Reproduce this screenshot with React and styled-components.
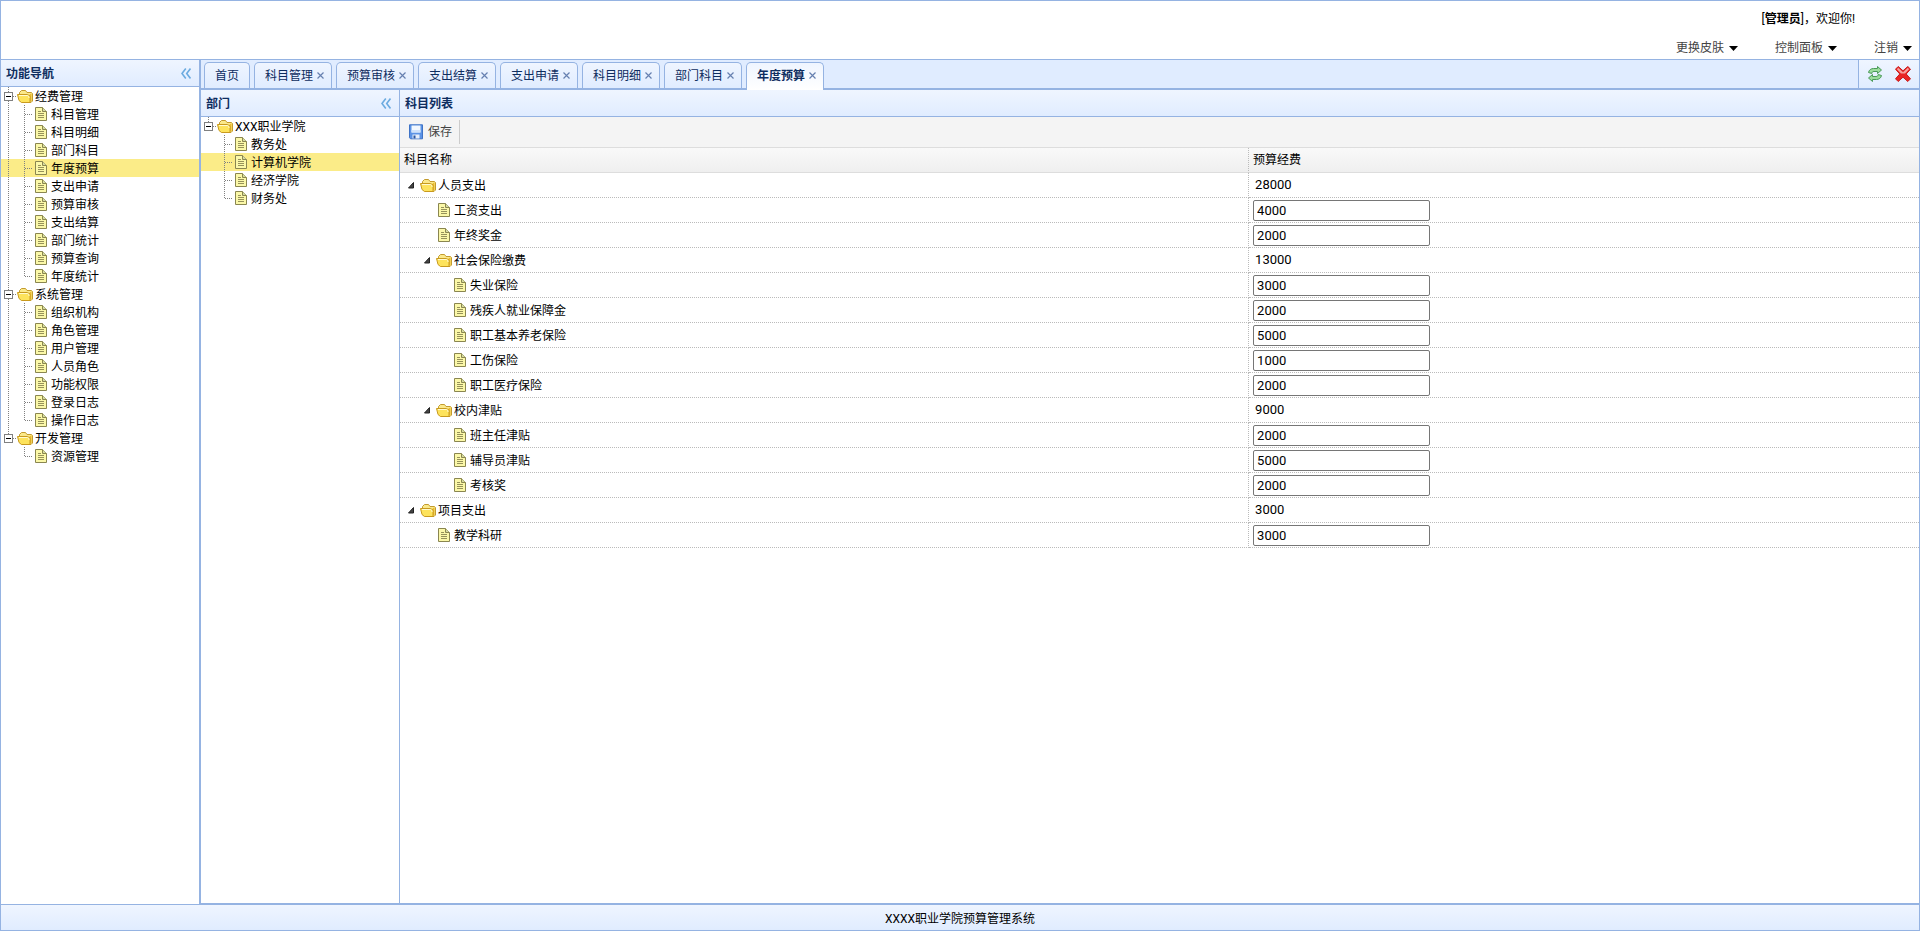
import React, { useState } from 'react'
import styled, { createGlobalStyle, css } from 'styled-components'

const GlobalStyle = createGlobalStyle`
  * {
    box-sizing: border-box;
  }
  body {
    margin: 0;
    background: #fff;
    color: #000;
    font: 12px/18px Roboto, "Noto Sans CJK SC", sans-serif;
  }
  button, input {
    font: inherit;
    color: inherit;
  }
  ul {
    list-style: none;
    margin: 0;
    padding: 0;
  }
`

const LINE = '#95b3e2'

const Page = styled.div`
  display: grid;
  height: 100vh;
  min-height: 500px;
  grid-template-columns: 199px 1fr;
  grid-template-rows: 59px 1fr 26px;
  grid-template-areas: "header header" "nav main" "footer footer";
  border: 1px solid ${LINE};
  border-top: 0;
`

const Header = styled.header`
  grid-area: header;
  display: flex;
  flex-direction: column;
  align-items: flex-end;
  border-top: 1px solid ${LINE};
`

const Welcome = styled.div`
  padding: 8px 64px 0 0;
  line-height: 20px;
`

const MenuBar = styled.div`
  display: flex;
  gap: 37px;
  padding: 9px 7px 0 0;
`

const MenuButton = styled.button`
  display: flex;
  align-items: center;
  gap: 5px;
  padding: 0;
  border: 0;
  background: none;
  color: #444;
  line-height: 20px;
`

const Nav = styled.nav`
  grid-area: nav;
  display: flex;
  flex-direction: column;
  border-top: 1px solid ${LINE};
  border-right: 1px solid ${LINE};
`

const Main = styled.main`
  grid-area: main;
  display: flex;
  flex-direction: column;
  min-width: 0;
  border: 1px solid ${LINE};
  border-right: 0;
`

const Footer = styled.footer`
  grid-area: footer;
  display: flex;
  align-items: center;
  justify-content: center;
  padding-top: 2px;
  border-top: 1px solid ${LINE};
  background: linear-gradient(#eff5ff, #e0ecff);
`

const PanelHeader = styled.div`
  display: flex;
  flex: none;
  align-items: center;
  justify-content: space-between;
  height: 27px;
  padding: 0 8px 0 5px;
  border-bottom: 1px solid ${LINE};
  background: linear-gradient(#eff5ff, #e0ecff);
`

const PanelTitle = styled.h2`
  margin: 0;
  padding-top: 2px;
  color: #0e2d5f;
  font-size: 12px;
`

const IconButton = styled.button`
  display: flex;
  padding: 0;
  border: 0;
  background: none;
`

const TabStrip = styled.div`
  display: flex;
  flex: none;
  height: 30px;
  border-bottom: 2px solid ${LINE};
  background: #e0ecff;
`

const TabList = styled.div`
  display: flex;
  flex: 1;
  gap: 4px;
  padding: 2px 0 0 3px;
`

const Tab = styled.div`
  display: flex;
  align-items: center;
  justify-content: center;
  gap: 4px;
  width: ${(p) => (p.$closable ? 78 : 46)}px;
  height: 26px;
  padding-left: ${(p) => (p.$closable ? 3 : 0)}px;
  border: 1px solid ${LINE};
  border-bottom: 0;
  border-radius: 5px 5px 0 0;
  background: linear-gradient(#eff5ff, #e0ecff);
  color: #0e2d5f;

  ${(p) => p.$active && css`
    height: 28px;
    padding-bottom: 2px;
    margin-bottom: -2px;
    background: linear-gradient(#eff5ff, #fff);
    font-weight: bold;
  `}
`

const TabName = styled.button`
  padding: 0;
  border: 0;
  background: none;
  white-space: nowrap;
`

const TabTools = styled.div`
  display: flex;
  align-items: center;
  gap: 12px;
  padding: 0 8px;
  border-left: 1px solid ${LINE};
  background: linear-gradient(#eff5ff, #e0ecff);
`

const Columns = styled.div`
  display: grid;
  flex: 1;
  grid-template-columns: 199px 1fr;
`

const Side = styled.section`
  border-right: 1px solid ${LINE};
`

const Content = styled.section`
  min-width: 0;
`

const TreeRow = styled.button`
  display: flex;
  align-items: center;
  width: 100%;
  height: 18px;
  padding: 0;
  border: 0;
  background: ${(p) => (p.$selected ? '#fbec88' : 'none')};
  text-align: left;
  white-space: nowrap;
`

const TreeLabel = styled.span`
  padding: 2px 0 0 2px;
`

const Toolbar = styled.div`
  display: flex;
  align-items: center;
  height: 31px;
  padding: 0 2px;
  border-bottom: 1px solid #ddd;
  background: #f4f4f4;
`

const ToolButton = styled.button`
  display: flex;
  align-items: center;
  gap: 4px;
  height: 24px;
  padding: 0 7px 0 6px;
  border: 0;
  border-right: 1px solid #ccc;
  background: none;
  color: #444;
`

const Grid = styled.table`
  width: 100%;
  border-collapse: separate;
  border-spacing: 0;
  table-layout: fixed;

  th {
    height: 25px;
    padding: 0 4px;
    border-bottom: 1px solid #ddd;
    background: linear-gradient(#f9f9f9, #efefef);
    font-weight: normal;
    text-align: left;
  }
  td {
    height: 25px;
    padding: 0 4px;
    border-bottom: 1px dotted #bbb;
  }
  th:first-child,
  td:first-child {
    width: 55.9%;
    border-right: 1px dotted #bbb;
  }
`

const NameCell = styled.div`
  display: flex;
  align-items: center;
  padding-left: ${(p) => p.$level * 16}px;
`

const Total = styled.span`
  padding-left: 2px;
  font-size: 13px;
`

const Amount = styled.input`
  display: block;
  width: 177px;
  height: 21px;
  padding: 0 3px;
  border: 1px solid #767676;
  border-radius: 2px;
  background: #fff;
  font-size: 13px;
`

const Icon = styled.svg`
  display: block;
  flex: none;
`

function FolderIcon() {
  return (
    <Icon width="16" height="18" viewBox="0 0 16 18">
      <path d="M2.500 8V5.500L4.500 3.500h4L10 5.500h4.500l1 1v7.500l-1.500 1.500H5z" fill="#fbe98a" stroke="#c39b2e" />
      <path d="M11.500 8.500l3-2.500v7.500l-1.500 1.500z" fill="#e9b92c" />
      <path d="M.5 7.500h10l2.500 1.500v6.500H4.500L2 13.500z" fill="#fde35c" stroke="#c99a1e" />
      <path d="M2 8.500h8.500l1.500 1v1.500" fill="none" stroke="#fffbd0" />
    </Icon>
  )
}

function FileIcon() {
  return (
    <Icon width="16" height="18" viewBox="0 0 16 18">
      <path d="M2.500 2.500h7l4 4v9h-11z" fill="#fbf8a8" stroke="#8a8650" />
      <path d="M9.500 2.500v4h4" fill="#d5dba0" stroke="#8a8650" />
      <path d="M5 6.500h3M5 8.500h6M5 10.500h6M5 12.500h6" stroke="#96925a" />
    </Icon>
  )
}

function TreeLines({ last, trunk }) {
  return (
    <Icon width="32" height="18" viewBox="0 0 32 18" stroke="#808080" strokeDasharray="1 1">
      {trunk && <path d="M7.500 0v18" />}
      <path d={last ? 'M23.500 0v9' : 'M23.500 0v18'} />
      <path d="M24 9.500h8" />
    </Icon>
  )
}

function ExpandBox({ last }) {
  return (
    <Icon width="16" height="18" viewBox="0 0 16 18">
      <path d={last ? 'M7.500 0v5' : 'M7.500 0v18'} stroke="#808080" strokeDasharray="1 1" />
      <path d="M12 9.500h4" stroke="#808080" strokeDasharray="1 1" />
      <rect x="3.500" y="5.500" width="8" height="8" fill="#fff" stroke="#808080" />
      <path d="M5 9.500h5" stroke="#000" />
    </Icon>
  )
}

function CollapseIcon() {
  return (
    <Icon width="10" height="11" viewBox="0 0 10 11" fill="none" stroke="#6cabe0" strokeWidth="1.600">
      <path d="M4.800 .5L1 5.500l3.800 5M9.500 .5L5.700 5.500l3.800 5" />
    </Icon>
  )
}

function CloseIcon() {
  return (
    <Icon width="7" height="7" viewBox="0 0 7 7" stroke="#6680b0" strokeWidth="1.200">
      <path d="M.5 .5l6 6M6.500 .5l-6 6" />
    </Icon>
  )
}

function DownIcon() {
  return (
    <Icon width="9" height="5" viewBox="0 0 9 5">
      <path d="M0 0h9L4.500 5z" />
    </Icon>
  )
}

function OpenArrow() {
  return (
    <Icon width="16" height="18" viewBox="0 0 16 18">
      <path d="M9.500 6.500v5.500H4.500z" fill="#444" stroke="#222" strokeLinejoin="round" />
    </Icon>
  )
}

function SaveIcon() {
  return (
    <Icon width="16" height="16" viewBox="0 0 16 16">
      <path d="M1.500 .8h13v14h-12l-1-1z" fill="#5b93e6" stroke="#3f73c6" />
      <path d="M3.500 1.500h9v7h-9z" fill="#f2f8ff" />
      <path d="M3.500 6h9v2.500h-9z" fill="#cfe2fb" />
      <path d="M4.500 10.500h7v4h-7z" fill="#e6eefa" />
      <path d="M5.500 11.500h2v3h-2z" fill="#2b56a0" />
    </Icon>
  )
}

function RefreshIcon() {
  return (
    <Icon width="16" height="16" viewBox="0 0 16 16" fill="#9bdc9c" stroke="#4a9a58" strokeLinejoin="round">
      <path d="M1.500 6.500C2 4 4 2.500 6.500 2.500h4V.5l4 3.500-4 3.500v-2H7c-1.500 0-2 .6-2.200 2z" />
      <path d="M14.500 9.500c-.5 2.500-2.500 4-5 4h-4v2l-4-3.500 4-3.500v2H9c1.500 0 2-.6 2.200-2z" />
    </Icon>
  )
}

function DeleteIcon() {
  return (
    <Icon width="16" height="16" viewBox="0 0 16 16">
      <path d="M3.200 .5L8 4.800 12.800.5l2.700 2.700L11.200 8l4.300 4.800-2.700 2.700L8 11.200l-4.800 4.300-2.700-2.700L4.800 8 .5 3.200z" fill="#ea2424" stroke="#c81a1a" strokeLinejoin="round" />
      <path d="M3.200 1.800L8 6.200l4.800-4.400 1.300 1.400L10 7.500H6L1.900 3.200z" fill="#f6a09c" />
    </Icon>
  )
}

const menus = [
  { name: '经费管理', items: ['科目管理', '科目明细', '部门科目', '年度预算', '支出申请', '预算审核', '支出结算', '部门统计', '预算查询', '年度统计'] },
  { name: '系统管理', items: ['组织机构', '角色管理', '用户管理', '人员角色', '功能权限', '登录日志', '操作日志'] },
  { name: '开发管理', items: ['资源管理'] },
]

const departments = [
  { name: 'XXX职业学院', items: ['教务处', '计算机学院', '经济学院', '财务处'] },
]

const tabs = ['首页', '科目管理', '预算审核', '支出结算', '支出申请', '科目明细', '部门科目', '年度预算']

const subjects = [
  { name: '人员支出', level: 0, amount: 28000, folder: true },
  { name: '工资支出', level: 1, amount: 4000 },
  { name: '年终奖金', level: 1, amount: 2000 },
  { name: '社会保险缴费', level: 1, amount: 13000, folder: true },
  { name: '失业保险', level: 2, amount: 3000 },
  { name: '残疾人就业保障金', level: 2, amount: 2000 },
  { name: '职工基本养老保险', level: 2, amount: 5000 },
  { name: '工伤保险', level: 2, amount: 1000 },
  { name: '职工医疗保险', level: 2, amount: 2000 },
  { name: '校内津贴', level: 1, amount: 9000, folder: true },
  { name: '班主任津贴', level: 2, amount: 2000 },
  { name: '辅导员津贴', level: 2, amount: 5000 },
  { name: '考核奖', level: 2, amount: 2000 },
  { name: '项目支出', level: 0, amount: 3000, folder: true },
  { name: '教学科研', level: 1, amount: 3000 },
]

function Tree({ groups, initial }) {
  const [selected, setSelected] = useState(initial)
  return (
    <ul>
      {groups.map((group, g) => {
        const lastGroup = g === groups.length - 1
        return (
          <li key={group.name}>
            <TreeRow>
              <ExpandBox last={lastGroup} />
              <FolderIcon />
              <TreeLabel>{group.name}</TreeLabel>
            </TreeRow>
            <ul>
              {group.items.map((item, i) => (
                <li key={item}>
                  <TreeRow $selected={item === selected} onClick={() => setSelected(item)}>
                    <TreeLines trunk={!lastGroup} last={i === group.items.length - 1} />
                    <FileIcon />
                    <TreeLabel>{item}</TreeLabel>
                  </TreeRow>
                </li>
              ))}
            </ul>
          </li>
        )
      })}
    </ul>
  )
}

function SubjectRow({ name, level, amount, folder }) {
  return (
    <tr>
      <td>
        <NameCell $level={folder ? level : level + 1}>
          {folder && <OpenArrow />}
          {folder ? <FolderIcon /> : <FileIcon />}
          <TreeLabel>{name}</TreeLabel>
        </NameCell>
      </td>
      <td>
        {folder ? <Total>{amount}</Total> : <Amount aria-label={name} defaultValue={amount} />}
      </td>
    </tr>
  )
}

function App() {
  const [active, setActive] = useState('年度预算')
  return (
    <Page>
      <GlobalStyle />
      <Header>
        <Welcome>[<strong>管理员</strong>]，欢迎你!</Welcome>
        <MenuBar>
          <MenuButton>更换皮肤 <DownIcon /></MenuButton>
          <MenuButton>控制面板 <DownIcon /></MenuButton>
          <MenuButton>注销 <DownIcon /></MenuButton>
        </MenuBar>
      </Header>
      <Nav>
        <PanelHeader>
          <PanelTitle>功能导航</PanelTitle>
          <IconButton aria-label="收起"><CollapseIcon /></IconButton>
        </PanelHeader>
        <Tree groups={menus} initial="年度预算" />
      </Nav>
      <Main>
        <TabStrip>
          <TabList>
            {tabs.map((tab, i) => (
              <Tab key={tab} $closable={i > 0} $active={tab === active}>
                <TabName onClick={() => setActive(tab)}>{tab}</TabName>
                {i > 0 && <IconButton aria-label="关闭"><CloseIcon /></IconButton>}
              </Tab>
            ))}
          </TabList>
          <TabTools>
            <IconButton aria-label="刷新"><RefreshIcon /></IconButton>
            <IconButton aria-label="关闭全部"><DeleteIcon /></IconButton>
          </TabTools>
        </TabStrip>
        <Columns>
          <Side>
            <PanelHeader>
              <PanelTitle>部门</PanelTitle>
              <IconButton aria-label="收起"><CollapseIcon /></IconButton>
            </PanelHeader>
            <Tree groups={departments} initial="计算机学院" />
          </Side>
          <Content>
            <PanelHeader>
              <PanelTitle>科目列表</PanelTitle>
            </PanelHeader>
            <Toolbar>
              <ToolButton><SaveIcon />保存</ToolButton>
            </Toolbar>
            <Grid>
              <thead>
                <tr>
                  <th>科目名称</th>
                  <th>预算经费</th>
                </tr>
              </thead>
              <tbody>
                {subjects.map((row) => <SubjectRow key={row.name} {...row} />)}
              </tbody>
            </Grid>
          </Content>
        </Columns>
      </Main>
      <Footer>XXXX职业学院预算管理系统</Footer>
    </Page>
  )
}

export default App
